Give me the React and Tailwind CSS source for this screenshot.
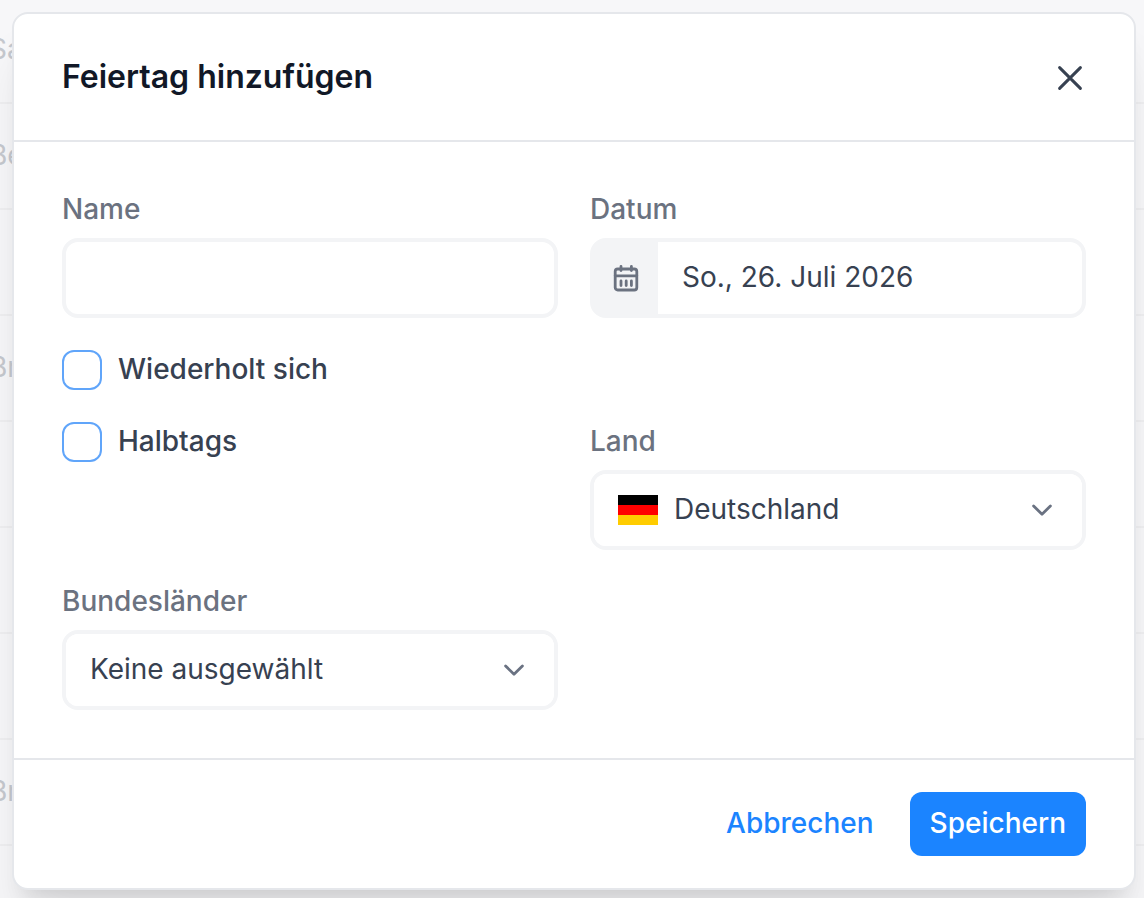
import React, { useState } from 'react';

const backgroundRows = ['Sa', 'Be', '', 'Br', '', '', '', 'Br', ''];

const CalendarIcon = () => (
  <svg className="w-7 h-7" viewBox="0 0 28 28" fill="none" stroke="currentColor" strokeLinecap="round" strokeLinejoin="round">
    <rect x="3.2" y="5" width="21.6" height="21" rx="2.5" strokeWidth="2.8" />
    <path strokeWidth="2.8" d="M3.2 11.8h21.6M9 2.4v4.2M19.4 2.4v4.2" />
    <path strokeWidth="2.8" d="M9 17v4.6M14.2 17v4.6M19.4 17v4.6" />
  </svg>
);

const ChevronIcon = () => (
  <svg className="pointer-events-none absolute right-7 top-1/2 -translate-y-1/2 w-6 h-6 text-gray-500" viewBox="0 0 24 24" fill="none" stroke="currentColor">
    <path strokeWidth="2.8" strokeLinecap="round" strokeLinejoin="round" d="M3.6 8L12 16.2L20.4 8" />
  </svg>
);

const GermanFlag = () => (
  <svg className="pointer-events-none absolute left-6 top-1/2 -translate-y-1/2 w-10" viewBox="0 0 40 30">
    <path fill="#000" d="M0 0h40v10H0z" />
    <path fill="#f00" d="M0 10h40v10H0z" />
    <path fill="#fc0" d="M0 20h40v10H0z" />
  </svg>
);

const Field = ({ id, label, children }) => (
  <div>
    <label htmlFor={id} className="block pb-2.5 leading-[38px] font-medium text-[#6b7280]">{label}</label>
    {children}
  </div>
);

const Checkbox = ({ id, label, checked, onChange }) => (
  <div className="flex items-start gap-4 h-10">
    <input
      id={id}
      type="checkbox"
      checked={checked}
      onChange={(e) => onChange(e.target.checked)}
      className="appearance-none w-10 h-10 rounded-xl border-2 border-[#60a5fa] bg-white checked:bg-[#1b84ff]"
    />
    <label htmlFor={id} className="font-medium leading-[38px] text-[#374151]">{label}</label>
  </div>
);

const App = () => {
  const [name, setName] = useState('');
  const [date, setDate] = useState('So., 26. Juli 2026');
  const [recurring, setRecurring] = useState(false);
  const [halfDay, setHalfDay] = useState(false);

  return (
    <div className="relative min-h-screen overflow-hidden bg-[#f7f7f9] pt-3 pr-2 pb-2 pl-3 font-['Inter',sans-serif] text-[28px] [font-optical-sizing:none]">
      <div className="absolute inset-0 overflow-hidden" aria-hidden="true">
        <div className="-mt-0.5">
          {backgroundRows.map((row, i) => (
            <div key={i} className="h-[106px] pb-0.5 border-b-2 border-[#efeff1] text-[#c5c8ce]">
              <div className="flex items-center h-full -ml-[11px]">{row}</div>
            </div>
          ))}
        </div>
      </div>

      <form
        role="dialog"
        aria-labelledby="dialog-title"
        onSubmit={(e) => e.preventDefault()}
        className="relative rounded-2xl border-2 border-gray-200 bg-white shadow-[0_40px_50px_-10px_rgba(0,0,0,0.1),0_16px_20px_-12px_rgba(0,0,0,0.1)]"
      >
        <header className="flex items-center justify-between px-12 py-10 border-b-2 border-gray-200">
          <h2 id="dialog-title" className="text-[32px] leading-[46px] font-semibold text-[#111827]">Feiertag hinzufügen</h2>
          <button type="button" aria-label="Schließen" className="text-[#374151]">
            <svg className="w-8 h-8" viewBox="0 0 32 32" fill="none" stroke="currentColor">
              <path strokeWidth="3" strokeLinecap="round" d="M5.6 6.6l20.8 20.8M26.4 6.6L5.6 27.4" />
            </svg>
          </button>
        </header>

        <div className="grid grid-cols-2 gap-8 p-12">
          <Field id="name" label="Name">
            <input
              id="name"
              type="text"
              value={name}
              onChange={(e) => setName(e.target.value)}
              className="block w-full h-20 px-6 pb-0.5 rounded-2xl border-4 border-[#f3f4f6] bg-white text-[#374151] outline-none"
            />
          </Field>
          <Field id="date" label="Datum">
            <div className="flex h-20 rounded-2xl border-4 border-[#f3f4f6] bg-[#f3f4f6] overflow-hidden">
              <span className="flex items-center justify-center w-16 text-[#6b7280]">
                <CalendarIcon />
              </span>
              <input
                id="date"
                type="text"
                value={date}
                onChange={(e) => setDate(e.target.value)}
                className="flex-1 min-w-0 px-6 pb-0.5 bg-white text-[#374151] outline-none"
              />
            </div>
          </Field>

          <div className="col-span-2">
            <Checkbox id="recurring" label="Wiederholt sich" checked={recurring} onChange={setRecurring} />
          </div>

          <Checkbox id="half-day" label="Halbtags" checked={halfDay} onChange={setHalfDay} />
          <Field id="country" label="Land">
            <div className="relative rounded-2xl border-4 border-[#f3f4f6]">
              <select id="country" className="block appearance-none w-full h-[72px] pl-20 pr-16 pb-0.5 rounded-xl bg-white text-[#374151] outline-none">
                <option>Deutschland</option>
              </select>
              <GermanFlag />
              <ChevronIcon />
            </div>
          </Field>

          <Field id="states" label="Bundesländer">
            <div className="relative rounded-2xl border-4 border-[#f3f4f6]">
              <select id="states" className="block appearance-none w-full h-[72px] pl-6 pr-16 pb-0.5 rounded-xl bg-white text-[#374151] outline-none">
                <option>Keine ausgewählt</option>
              </select>
              <ChevronIcon />
            </div>
          </Field>
        </div>

        <footer className="flex justify-end gap-4 px-12 py-8 border-t-2 border-gray-200 font-medium">
          <button type="button" className="h-16 px-5 pb-0.5 rounded-xl text-[#1b84ff]">Abbrechen</button>
          <button type="submit" className="h-16 px-5 pb-0.5 rounded-xl bg-[#1b84ff] text-white">Speichern</button>
        </footer>
      </form>
    </div>
  );
};

export default App;
